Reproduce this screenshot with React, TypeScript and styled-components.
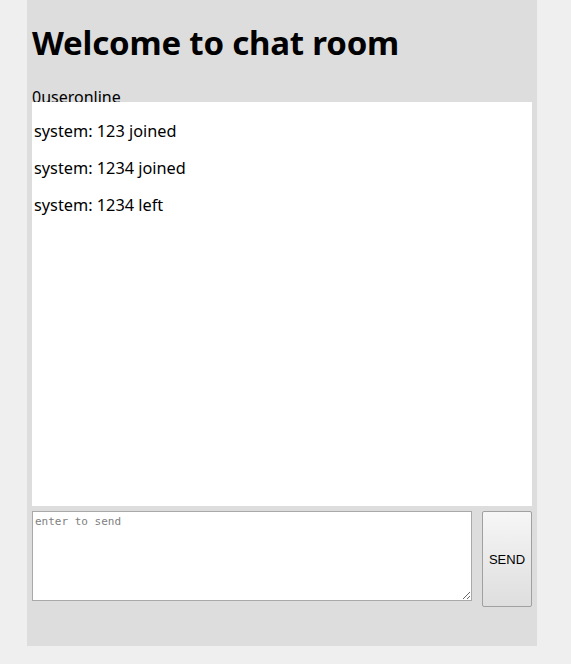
import React from "react";
import styled, { createGlobalStyle } from "styled-components";

const Global = createGlobalStyle`
  html, body { margin: 0; padding: 0; background: #efefef; }
  body { font-family: "Noto Sans", "Open Sans", sans-serif; color: #000; }
`;

const Room = styled.div`
  width: 500px;
  margin-left: 27px;
  padding: 1px 5px 39px;
  background: #dddddd;
`;

const Title = styled.h1`
  font-size: 33px;
  font-weight: 700;
  margin: 19px 0 22px;
  line-height: 46px;
  letter-spacing: -0.2px;
`;

const Online = styled.div`
  font-size: 16px;
  line-height: 18px;
  height: 14px;
  position: relative;
  z-index: 0;
`;

const Messages = styled.div`
  position: relative;
  z-index: 1;
  height: 404px;
  background: #fff;
  padding: 3px 2px 0;
  box-sizing: border-box;
`;

const Message = styled.p`
  margin: 16px 0 0;
  font-size: 16.3px;
  line-height: 21px;
`;

const InputRow = styled.div`
  display: flex;
  align-items: flex-start;
  gap: 10px;
  margin-top: 5px;
`;

const Input = styled.textarea`
  width: 440px;
  height: 90px;
  box-sizing: border-box;
  border: 1px solid #a9a9a9;
  padding: 3px 2px;
  margin: 0;
  font-family: "DejaVu Sans Mono", "Liberation Mono", monospace;
  font-size: 11px;
  resize: vertical;
  background: #fff;
  &::placeholder { color: #808080; }
`;

const SendButton = styled.button`
  width: 50px;
  height: 96px;
  box-sizing: border-box;
  border: 1px solid #a0a0a0;
  border-radius: 2px;
  background: linear-gradient(#f6f6f6, #dedede);
  font-family: "Liberation Sans", Arial, sans-serif;
  font-size: 13px;
  color: #000;
  padding: 0;
`;

export default function App() {
  const msgs = ["system: 123 joined", "system: 1234 joined", "system: 1234 left"];
  return (
    <>
      <Global />
      <Room>
        <Title>Welcome to chat room</Title>
        <Online>0useronline</Online>
        <Messages>
          {msgs.map((m, i) => (
            <Message key={i}>{m}</Message>
          ))}
        </Messages>
        <InputRow>
          <Input placeholder="enter to send" />
          <SendButton>SEND</SendButton>
        </InputRow>
      </Room>
    </>
  );
}
